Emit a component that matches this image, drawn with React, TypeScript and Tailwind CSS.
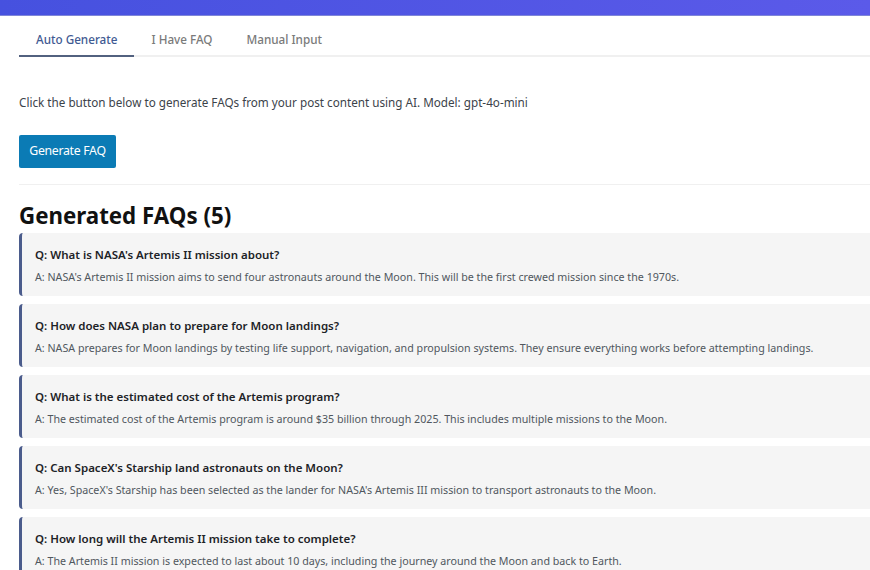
import { useState } from 'react';

const FAQS = [
  {
    q: "What is NASA's Artemis II mission about?",
    a: "NASA's Artemis II mission aims to send four astronauts around the Moon. This will be the first crewed mission since the 1970s.",
  },
  {
    q: 'How does NASA plan to prepare for Moon landings?',
    a: 'NASA prepares for Moon landings by testing life support, navigation, and propulsion systems. They ensure everything works before attempting landings.',
  },
  {
    q: 'What is the estimated cost of the Artemis program?',
    a: 'The estimated cost of the Artemis program is around $35 billion through 2025. This includes multiple missions to the Moon.',
  },
  {
    q: "Can SpaceX's Starship land astronauts on the Moon?",
    a: "Yes, SpaceX's Starship has been selected as the lander for NASA's Artemis III mission to transport astronauts to the Moon.",
  },
  {
    q: 'How long will the Artemis II mission take to complete?',
    a: 'The Artemis II mission is expected to last about 10 days, including the journey around the Moon and back to Earth.',
  },
];

const TABS = ['Auto Generate', 'I Have FAQ', 'Manual Input'];

export default function App() {
  const [tab, setTab] = useState('Auto Generate');

  return (
    <div className="min-h-screen bg-white font-['Noto_Sans',sans-serif] text-[#1d2327]">
      {/* Top bar */}
      <div className="h-4 bg-gradient-to-r from-[#4651df] to-[#5b5ae9] border-b border-[#7f86d8]" />

      <div className="pl-[19px]">
        {/* Tabs */}
        <div className="flex border-b-2 border-[#f0f0f0] pt-[10px]">
          {TABS.map((t) => {
            const active = tab === t;
            return (
              <button
                key={t}
                type="button"
                onClick={() => setTab(t)}
                className={`-mb-[2px] px-[17px] pt-[5px] pb-[6px] text-[11.7px] font-medium border-b-2 ${
                  active ? 'text-[#3f5a92] border-[#52617f]' : 'text-[#7a7a7a] border-transparent'
                }`}
              >
                {t}
              </button>
            );
          })}
        </div>

        <p className="mt-[37px] text-[11.7px] text-[#3c434a]">
          Click the button below to generate FAQs from your post content using AI. Model: gpt-4o-mini
        </p>

        <button
          type="button"
          className="mt-[24px] h-[33px] w-[97px] rounded-[2px] bg-[#0b7bb5] text-[12.3px] text-white tracking-[-0.3px]"
        >
          Generate FAQ
        </button>

        <div className="mt-[16px] border-t border-[#f0f0f0]" />

        <h2 className="mt-[16px] text-[22.3px] font-bold leading-[30px] text-[#111]">
          Generated FAQs (5)
        </h2>

        <div className="mt-[2px] flex flex-col gap-[8px]">
          {FAQS.map((f) => (
            <div
              key={f.q}
              className="h-[63px] rounded-l-[4px] border-l-[3px] border-[#4b5c8c] bg-[#f5f5f5] pl-[13px] pt-[13px]"
            >
              <div className="text-[11.5px] font-semibold leading-[18px] text-[#1d2327]">Q: {f.q}</div>
              <div className="mt-[5px] text-[10.7px] leading-[16px] text-[#50575e]">A: {f.a}</div>
            </div>
          ))}
        </div>
      </div>
    </div>
  );
}
